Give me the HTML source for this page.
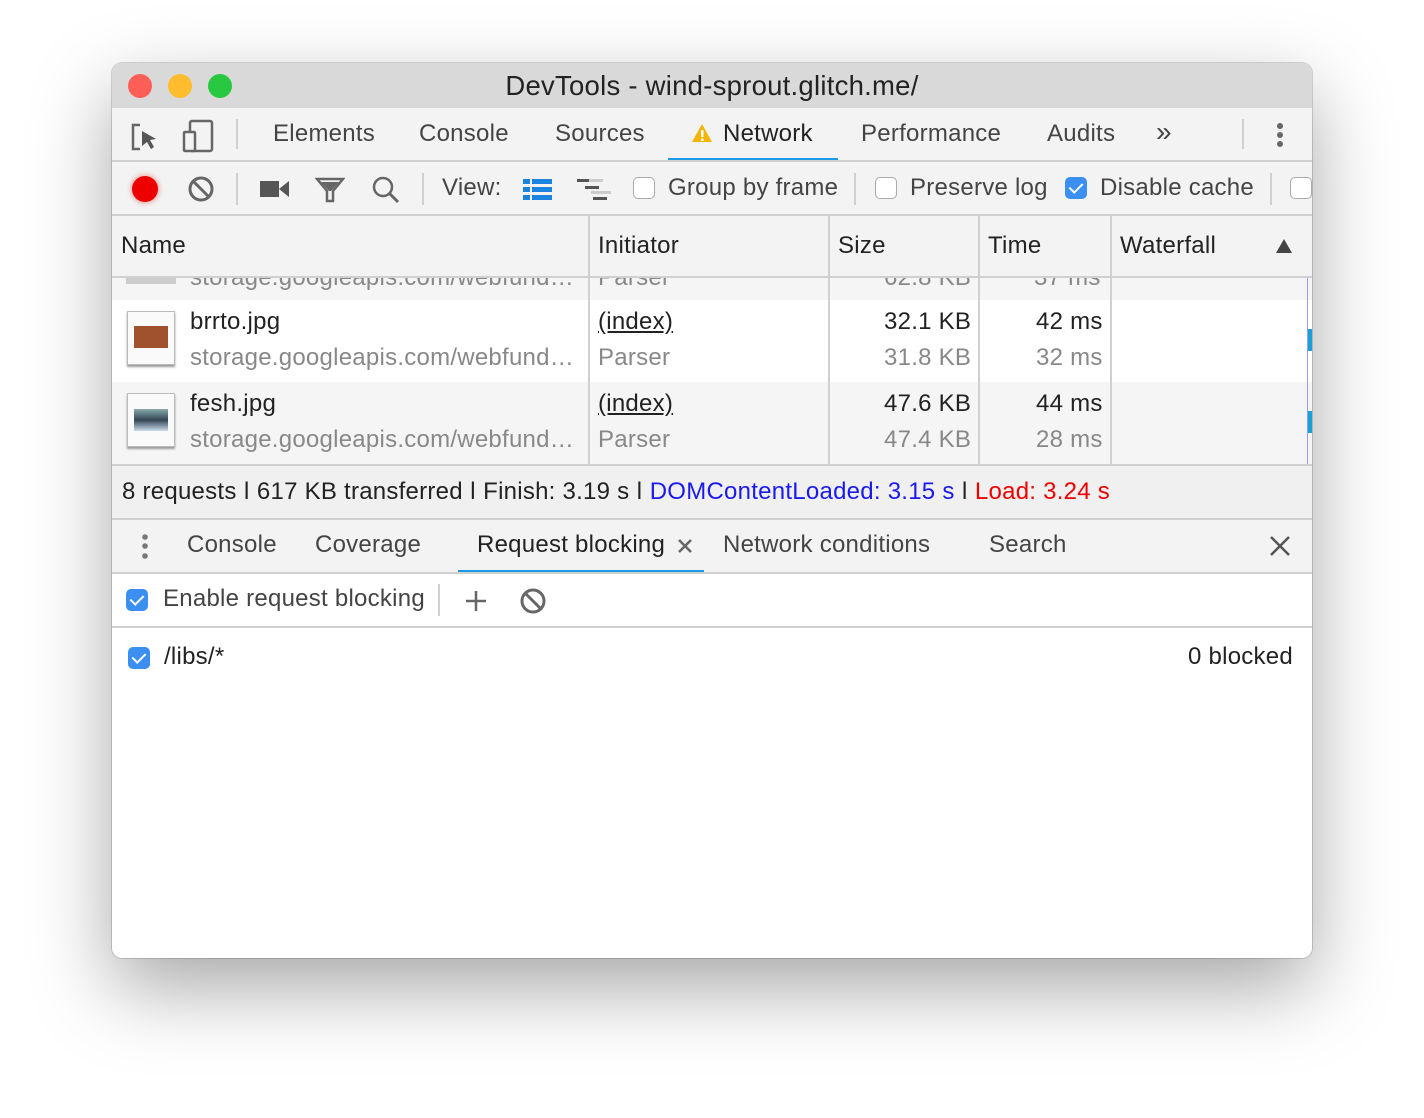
<!DOCTYPE html>
<html><head><style>
*{margin:0;padding:0;box-sizing:border-box}
body{width:1424px;height:1118px;background:#fff;font-family:"Liberation Sans",Arial,sans-serif;font-size:24px;letter-spacing:0.25px;color:#333;position:relative;overflow:hidden}
.win{position:absolute;left:112px;top:63px;width:1200px;height:895px;border-radius:10px;overflow:hidden;background:#fff;box-shadow:0 30px 80px rgba(0,0,0,.35),0 0 0 1px rgba(0,0,0,.15)}
.a{position:absolute;white-space:nowrap}
.hl{position:absolute;left:0;width:1200px;height:2px;background:#d0d0d0}
.vl{position:absolute;width:2px;background:#d0d0d0}
.cb{position:absolute;width:22px;height:22px;border-radius:5px;background:#fff;border:1.5px solid #aaa}
.cbc{position:absolute;width:22px;height:22px;border-radius:5px;background:#3b8ff0}
.cbc:after{content:"";position:absolute;left:7px;top:3px;width:6px;height:11px;border:solid #fff;border-width:0 2.5px 2.5px 0;transform:rotate(45deg)}
.g{color:#888}
</style></head><body>
<div class="win">
<div class="a" style="left:0;top:0;width:1200px;height:45px;background:#d9d9d9"></div>
<div class="a" style="left:16px;top:11px;width:24px;height:24px;border-radius:50%;background:#fd5f57"></div>
<div class="a" style="left:56px;top:11px;width:24px;height:24px;border-radius:50%;background:#febc2e"></div>
<div class="a" style="left:96px;top:11px;width:24px;height:24px;border-radius:50%;background:#28c840"></div>
<div class="a" style="left:0;width:1200px;top:7px;text-align:center;font-size:27.5px;color:#222">DevTools - wind-sprout.glitch.me/</div>

<div class="a" style="left:0;top:45px;width:1200px;height:108px;background:#f3f3f3"></div>
<svg class="a" style="left:18px;top:58px" width="30" height="32"><path d="M10 4H3v24h7" fill="none" stroke="#666" stroke-width="2.5"/><path d="M12 10l14 8-6 1 4 7-3 2-4-7-5 4z" fill="#555"/></svg>
<svg class="a" style="left:70px;top:55px" width="34" height="36"><rect x="8" y="3" width="22" height="30" rx="2" fill="none" stroke="#666" stroke-width="2.5"/><rect x="2" y="14" width="11" height="19" rx="1" fill="#f3f3f3" stroke="#666" stroke-width="2.5"/></svg>
<div class="vl" style="left:124px;top:56px;height:30px"></div>
<div class="a" style="left:161px;top:57px;color:#444">Elements</div>
<div class="a" style="left:307px;top:57px;color:#444">Console</div>
<div class="a" style="left:443px;top:57px;color:#444">Sources</div>
<svg class="a" style="left:579px;top:59px" width="22" height="22"><path d="M11 2L21 20H1z" fill="#f4b400"/><rect x="10" y="8" width="2.5" height="7" fill="#fff"/><rect x="10" y="16.5" width="2.5" height="2.5" fill="#fff"/></svg>
<div class="a" style="left:611px;top:57px;color:#222">Network</div>
<div class="a" style="left:556px;top:95px;width:170px;height:3px;background:#1a9bea"></div>
<div class="a" style="left:749px;top:57px;color:#444">Performance</div>
<div class="a" style="left:935px;top:57px;color:#444">Audits</div>
<div class="a" style="left:1044px;top:53px;color:#444;font-size:28px">»</div>
<div class="vl" style="left:1130px;top:56px;height:30px"></div>
<svg class="a" style="left:1162px;top:58px" width="12" height="30"><circle cx="6" cy="5" r="3" fill="#666"/><circle cx="6" cy="14" r="3" fill="#666"/><circle cx="6" cy="23" r="3" fill="#666"/></svg>
<div class="hl" style="top:97px"></div>

<div class="a" style="left:20px;top:113px;width:26px;height:26px;border-radius:50%;background:#e00;box-shadow:0 0 4px 2px rgba(230,0,0,.25)"></div>
<svg class="a" style="left:75px;top:112px" width="28" height="28"><circle cx="14" cy="14" r="11" fill="none" stroke="#666" stroke-width="3"/><path d="M6 6l16 16" stroke="#666" stroke-width="3"/></svg>
<div class="vl" style="left:124px;top:110px;height:32px"></div>
<svg class="a" style="left:148px;top:116px" width="30" height="20"><rect x="0" y="2" width="19" height="16" fill="#555"/><path d="M19 10l10-8v16z" fill="#555"/></svg>
<svg class="a" style="left:203px;top:113px" width="30" height="28"><path d="M2 3h26L18 15v10h-6V15z" fill="none" stroke="#666" stroke-width="2.5"/><path d="M6 6h18l-8 9h-2z" fill="#666"/></svg>
<svg class="a" style="left:259px;top:112px" width="30" height="32"><circle cx="12" cy="12" r="9" fill="none" stroke="#666" stroke-width="2.5"/><path d="M18 18l9 9" stroke="#666" stroke-width="3"/></svg>
<div class="vl" style="left:310px;top:110px;height:32px"></div>
<div class="a" style="left:330px;top:111px;color:#444">View:</div>
<svg class="a" style="left:411px;top:116px" width="30" height="22"><g fill="#1a82e0"><rect x="0" y="0" width="7" height="5"/><rect x="9" y="0" width="20" height="5"/><rect x="0" y="8" width="7" height="5"/><rect x="9" y="8" width="20" height="5"/><rect x="0" y="16" width="7" height="5"/><rect x="9" y="16" width="20" height="5"/></g></svg>
<svg class="a" style="left:465px;top:116px" width="34" height="22"><rect x="0" y="0" width="26" height="3" fill="#ccc"/><rect x="0" y="0" width="12" height="3" fill="#555"/><rect x="8" y="7" width="14" height="3" fill="#555"/><rect x="14" y="12" width="20" height="3" fill="#ccc"/><rect x="16" y="18" width="14" height="3" fill="#555"/></svg>
<div class="cb" style="left:521px;top:114px"></div>
<div class="a" style="left:556px;top:111px;color:#444">Group by frame</div>
<div class="vl" style="left:742px;top:110px;height:32px"></div>
<div class="cb" style="left:763px;top:114px"></div>
<div class="a" style="left:798px;top:111px;color:#444">Preserve log</div>
<div class="cbc" style="left:953px;top:114px"></div>
<div class="a" style="left:988px;top:111px;color:#444">Disable cache</div>
<div class="vl" style="left:1158px;top:110px;height:32px"></div>
<div class="cb" style="left:1178px;top:114px"></div>
<div class="hl" style="top:151px"></div>

<div class="a" style="left:0;top:153px;width:1200px;height:61px;background:#f3f3f3"></div>
<div class="a" style="left:9px;top:169px;color:#222">Name</div>
<div class="a" style="left:486px;top:169px;color:#222">Initiator</div>
<div class="a" style="left:726px;top:169px;color:#222">Size</div>
<div class="a" style="left:876px;top:169px;color:#222">Time</div>
<div class="a" style="left:1008px;top:169px;color:#222">Waterfall</div>
<svg class="a" style="left:1163px;top:175px" width="18" height="16"><path d="M9 1l8 14H1z" fill="#444"/></svg>
<div class="hl" style="top:213px"></div>

<div class="a" style="left:0;top:215px;width:1200px;height:22px;background:#f5f5f5;overflow:hidden">
<div class="a g" style="left:78px;top:-14px">storage.googleapis.com/webfund…</div>
<div class="a g" style="left:486px;top:-14px">Parser</div>
<div class="a g" style="left:772px;top:-14px">62.8 KB</div>
<div class="a g" style="left:922px;top:-14px">37 ms</div>
<div class="a" style="left:14px;top:0;width:50px;height:6px;background:#ccc"></div>
</div>
<div class="a" style="left:0;top:237px;width:1200px;height:82px;background:#fff"></div>
<div class="a" style="left:0;top:319px;width:1200px;height:82px;background:#f5f5f5"></div>
<div class="a" style="left:15px;top:248px;width:48px;height:54px;border:1px solid #bbb;background:#fafafa;box-shadow:0 2px 2px #999"></div>
<div class="a" style="left:22px;top:263px;width:34px;height:22px;background:#a0522d"></div>
<div class="a" style="left:15px;top:330px;width:48px;height:54px;border:1px solid #bbb;background:#fafafa;box-shadow:0 2px 2px #999"></div>
<div class="a" style="left:22px;top:346px;width:34px;height:22px;background:linear-gradient(#8aa,#345 50%,#cde)"></div>
<div class="a" style="left:78px;top:245px;color:#222">brrto.jpg</div>
<div class="a g" style="left:78px;top:281px">storage.googleapis.com/webfund…</div>
<div class="a" style="left:486px;top:245px;color:#222;text-decoration:underline">(index)</div>
<div class="a g" style="left:486px;top:281px">Parser</div>
<div class="a" style="left:772px;top:245px;color:#222">32.1 KB</div>
<div class="a g" style="left:772px;top:281px">31.8 KB</div>
<div class="a" style="left:924px;top:245px;color:#222">42 ms</div>
<div class="a g" style="left:924px;top:281px">32 ms</div>
<div class="a" style="left:78px;top:327px;color:#222">fesh.jpg</div>
<div class="a g" style="left:78px;top:363px">storage.googleapis.com/webfund…</div>
<div class="a" style="left:486px;top:327px;color:#222;text-decoration:underline">(index)</div>
<div class="a g" style="left:486px;top:363px">Parser</div>
<div class="a" style="left:772px;top:327px;color:#222">47.6 KB</div>
<div class="a g" style="left:772px;top:363px">47.4 KB</div>
<div class="a" style="left:924px;top:327px;color:#222">44 ms</div>
<div class="a g" style="left:924px;top:363px">28 ms</div>
<div class="vl" style="left:476px;top:153px;height:248px"></div>
<div class="vl" style="left:716px;top:153px;height:248px"></div>
<div class="vl" style="left:866px;top:153px;height:248px"></div>
<div class="vl" style="left:998px;top:153px;height:248px"></div>
<div class="a" style="left:1195px;top:215px;width:1px;height:186px;background:#99f"></div>
<div class="a" style="left:1196px;top:266px;width:4px;height:22px;background:#1aa0d8"></div>
<div class="a" style="left:1196px;top:348px;width:4px;height:22px;background:#1aa0d8"></div>

<div class="a" style="left:0;top:401px;width:1200px;height:54px;background:#f0f0f0;border-top:2px solid #d0d0d0"></div>
<div class="a" style="left:10px;top:415px;color:#222">8 requests ǀ 617 KB transferred ǀ Finish: 3.19 s ǀ <span style="color:#1a1aee">DOMContentLoaded: 3.15 s</span> ǀ <span style="color:#e00">Load: 3.24 s</span></div>
<div class="hl" style="top:455px"></div>

<div class="a" style="left:0;top:457px;width:1200px;height:52px;background:#f3f3f3"></div>
<svg class="a" style="left:28px;top:470px" width="10" height="30"><circle cx="5" cy="4" r="2.8" fill="#777"/><circle cx="5" cy="13" r="2.8" fill="#777"/><circle cx="5" cy="23" r="2.8" fill="#777"/></svg>
<div class="a" style="left:75px;top:468px;color:#444">Console</div>
<div class="a" style="left:203px;top:468px;color:#444">Coverage</div>
<div class="a" style="left:365px;top:468px;color:#222">Request blocking</div>
<svg class="a" style="left:565px;top:475px" width="16" height="16"><path d="M2 2l12 12M14 2L2 14" stroke="#666" stroke-width="2.5"/></svg>
<div class="a" style="left:346px;top:507px;width:246px;height:3px;background:#1a9bea"></div>
<div class="a" style="left:611px;top:468px;color:#444">Network conditions</div>
<div class="a" style="left:877px;top:468px;color:#444">Search</div>
<svg class="a" style="left:1157px;top:472px" width="22" height="22"><path d="M2 2l18 18M20 2L2 20" stroke="#555" stroke-width="2.5"/></svg>
<div class="hl" style="top:509px"></div>

<div class="cbc" style="left:14px;top:526px"></div>
<div class="a" style="left:51px;top:522px;color:#444">Enable request blocking</div>
<div class="vl" style="left:326px;top:521px;height:32px"></div>
<svg class="a" style="left:352px;top:526px" width="24" height="24"><path d="M12 2v20M2 12h20" stroke="#666" stroke-width="2.5"/></svg>
<svg class="a" style="left:407px;top:524px" width="28" height="28"><circle cx="14" cy="14" r="11" fill="none" stroke="#666" stroke-width="3"/><path d="M6 6l16 16" stroke="#666" stroke-width="3"/></svg>
<div class="hl" style="top:563px"></div>

<div class="cbc" style="left:16px;top:584px"></div>
<div class="a" style="left:52px;top:580px;color:#222">/libs/*</div>
<div class="a" style="left:1076px;top:580px;color:#222">0 blocked</div>
</div>
</body></html>
